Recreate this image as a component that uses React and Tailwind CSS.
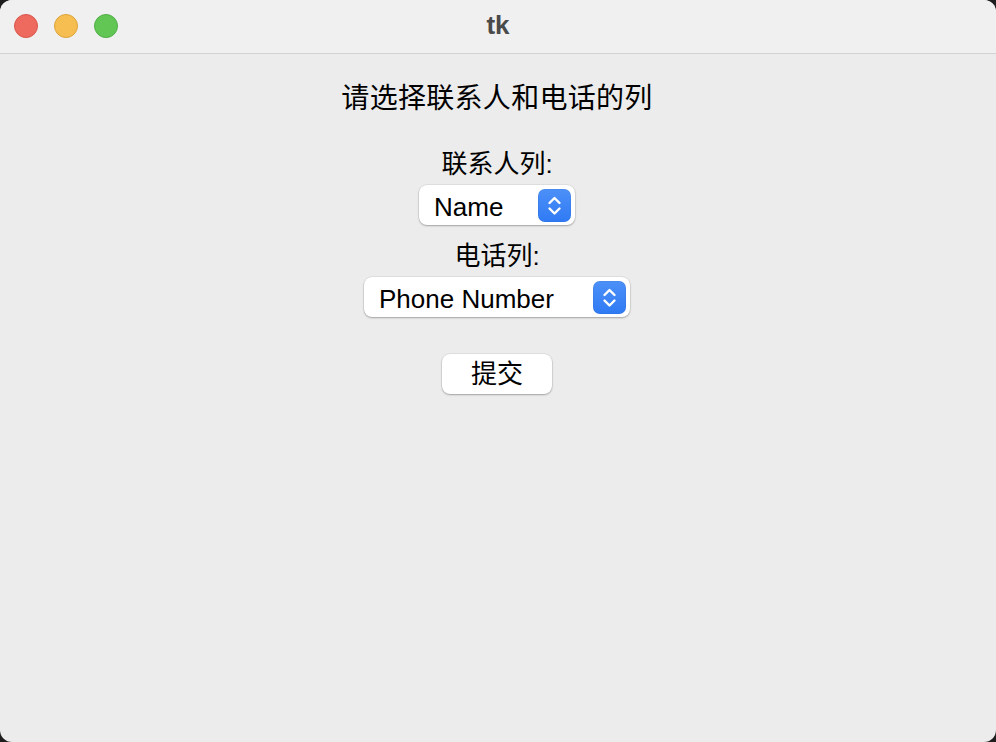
import React from "react";

const cjk = { fontFamily: '"Liberation Sans", "Noto Sans CJK SC", sans-serif' };

function Stepper() {
  return (
    <div className="w-[33px] h-[33px] rounded-[7px] bg-gradient-to-b from-[#4c90f8] to-[#2f7af4] flex items-center justify-center shadow-[inset_0_0_0_0.5px_rgba(0,0,0,0.08)]">
      <svg width="33" height="33" viewBox="0 0 33 33" fill="none">
        <path d="M11.5 14 L16.5 9 L21.5 14" stroke="white" strokeWidth="2.4" strokeLinecap="round" strokeLinejoin="round" />
        <path d="M11.5 19.5 L16.5 24.5 L21.5 19.5" stroke="white" strokeWidth="2.4" strokeLinecap="round" strokeLinejoin="round" />
      </svg>
    </div>
  );
}

function Combo({ value, width }) {
  return (
    <div
      className={`${width} h-[40px] bg-white rounded-[8px] flex items-center justify-between pl-[15px] pr-[4px] shadow-[0_1px_2px_rgba(0,0,0,0.28),0_0_0_0.5px_rgba(0,0,0,0.1)]`}
    >
      <span className="text-[26px] leading-[40px] pt-[3px] text-black" style={cjk}>{value}</span>
      <Stepper />
    </div>
  );
}

export default function App() {
  return (
    <div className="w-[996px] h-[742px] bg-[#1e1e1e]">
      <div className="w-full h-full rounded-[12px] overflow-hidden bg-[#ececec] flex flex-col" style={cjk}>
        <div className="h-[54px] shrink-0 bg-[#f0f0f0] border-b border-[#d2d2d2] relative flex items-center justify-center">
          <div className="absolute left-[14px] top-[14px] flex gap-[16px]">
            <div className="w-[24px] h-[24px] rounded-full bg-[#ee6a5f] border border-[#d9564b]" />
            <div className="w-[24px] h-[24px] rounded-full bg-[#f6be50] border border-[#dca33b]" />
            <div className="w-[24px] h-[24px] rounded-full bg-[#62c655] border border-[#4fae45]" />
          </div>
          <span className="text-[26px] font-bold text-[#4a4a4a] leading-none pb-[3px]">tk</span>
        </div>
        <div className="flex flex-col items-center pr-[2px]">
          <div className="mt-[28px] text-[28px] leading-[34px] text-black tracking-[0.3px]">请选择联系人和电话的列</div>
          <div className="mt-[32px] text-[26px] leading-[32px] text-black">联系人列:</div>
          <div className="mt-[5px]">
            <Combo value="Name" width="w-[156px]" />
          </div>
          <div className="mt-[15px] text-[26px] leading-[32px] text-black">电话列:</div>
          <div className="mt-[5px]">
            <Combo value="Phone Number" width="w-[266px]" />
          </div>
          <button className="mt-[37px] w-[110px] h-[40px] bg-white rounded-[8px] text-[26px] leading-[40px] text-black shadow-[0_1px_2px_rgba(0,0,0,0.28),0_0_0_0.5px_rgba(0,0,0,0.1)]">
            提交
          </button>
        </div>
      </div>
    </div>
  );
}
